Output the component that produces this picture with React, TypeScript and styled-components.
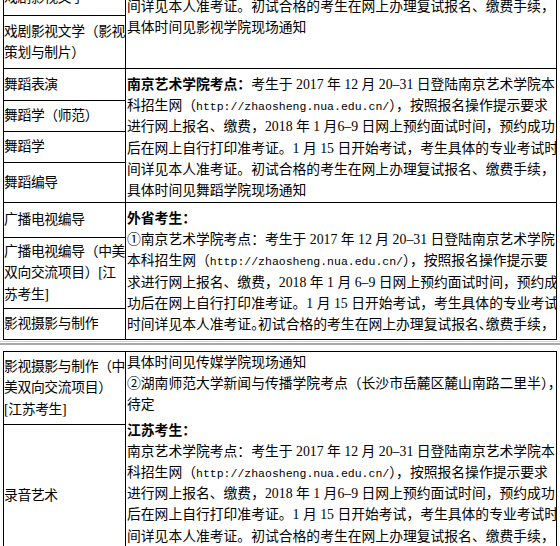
import React from 'react';
import styled, { createGlobalStyle } from 'styled-components';

const GlobalStyle = createGlobalStyle`
  html, body {
    margin: 0;
    padding: 0;
    background: #fff;
  }
  body {
    overflow: hidden;
    color: #000;
    font-family: "Liberation Serif", "Noto Sans CJK SC", serif;
    font-size: 13.8px;
  }
`;

const Page = styled.div`
  width: 560px;
  height: 546px;
  overflow: hidden;
`;

const Sheet = styled.div<{ $rows: number[]; $shift?: number }>`
  display: grid;
  grid-template-columns: 122px 431px;
  grid-template-rows: ${(p) => p.$rows.map((r) => `${r}px`).join(' ')};
  width: 554px;
  margin-left: 3px;
  margin-top: ${(p) => p.$shift ?? 0}px;
  border-top: 1px solid #000;
  border-left: 1px solid #000;
  box-sizing: border-box;
`;

const Subject = styled.div`
  grid-column: 1;
  display: flex;
  flex-direction: column;
  justify-content: center;
  min-width: 0;
  letter-spacing: -0.35px;
  border-right: 1px solid #000;
  border-bottom: 1px solid #000;
  box-sizing: border-box;
`;

const Notice = styled.div<{ $row: number; $span: number; $pad?: number }>`
  grid-column: 2;
  grid-row: ${(p) => p.$row} / span ${(p) => p.$span};
  padding: ${(p) => p.$pad ?? 5}px 0 0 1px;
  min-width: 0;
  overflow: hidden;
  border-right: 1px solid #000;
  border-bottom: 1px solid #000;
  box-sizing: border-box;
`;

const Block = styled.div<{ $gap?: number }>`
  margin-top: ${(p) => p.$gap ?? 0}px;
`;

const Line = styled.div`
  height: 21.2px;
  line-height: 21.2px;
  white-space: nowrap;
`;

const Lead = styled.strong`
  font-weight: 700;
`;

const Url = styled.span`
  font-family: "Liberation Mono", monospace;
  font-size: 11.5px;
`;

// half-width punctuation, as in the lines that hold one character more
const Narrow = styled.span`
  font-feature-settings: "halt";
`;

const PageBreak = styled.div`
  height: 11px;
  padding-top: 1px;
  box-sizing: border-box;

  &::before {
    content: '';
    display: block;
    height: 1px;
    background: #d4d4d4;
  }

  &::after {
    content: '';
    display: block;
    margin-top: 1px;
    height: 2px;
    background: #a9a9a9;
  }
`;

const SITE = 'http://zhaosheng.nua.edu.cn/';

function Label({ lines }: { lines: string[] }): JSX.Element {
  return (
    <Subject>
      {lines.map((text) => (
        <Line key={text}>{text}</Line>
      ))}
    </Subject>
  );
}

function App(): JSX.Element {
  return (
    <Page>
      <GlobalStyle />
      <Sheet $rows={[35, 53, 32, 31, 31, 40, 35, 71, 31]} $shift={-20}>
        <Label lines={['戏剧影视文学']} />
        <Label lines={['戏剧影视文学（影视', '策划与制片）']} />
        <Label lines={['舞蹈表演']} />
        <Label lines={['舞蹈学（师范）']} />
        <Label lines={['舞蹈学']} />
        <Label lines={['舞蹈编导']} />
        <Label lines={['广播电视编导']} />
        <Label lines={['广播电视编导（中美', '双向交流项目）[江', '苏考生]']} />
        <Label lines={['影视摄影与制作']} />

        <Notice $row={1} $span={2} $pad={15}>
          <Line>间详见本人准考证。初试合格的考生在网上办理复试报名、缴费手续，</Line>
          <Line>具体时间见影视学院现场通知</Line>
        </Notice>

        <Notice $row={3} $span={4}>
          <Line>
            <Lead>南京艺术学院考点：</Lead>考生于 2017 年 12 月 20–31 日登陆南京艺术学院本
          </Line>
          <Line>
            科招生网（<Url>{SITE}</Url>），按照报名操作提示要求
          </Line>
          <Line>进行网上报名、缴费，2018 年 1 月6–9 日网上预约面试时间，预约成功</Line>
          <Line>后在网上自行打印准考证。1 月 15 日开始考试，考生具体的专业考试时</Line>
          <Line>间详见本人准考证。初试合格的考生在网上办理复试报名、缴费手续，</Line>
          <Line>具体时间见舞蹈学院现场通知</Line>
        </Notice>

        <Notice $row={7} $span={3}>
          <Line>
            <Lead>外省考生：</Lead>
          </Line>
          <Line>①南京艺术学院考点：考生于 2017 年 12 月 20–31 日登陆南京艺术学院</Line>
          <Line>
            本科招生网（<Url>{SITE}</Url>），按照报名操作提示要
          </Line>
          <Line>求进行网上报名、缴费，2018 年 1 月 6–9 日网上预约面试时间，预约成</Line>
          <Line>功后在网上自行打印准考证。1 月 15 日开始考试，考生具体的专业考试</Line>
          <Line>
            时间详见本人准考证<Narrow>。</Narrow>初试合格的考生在网上办理复试报名<Narrow>、</Narrow>缴费手续，
          </Line>
        </Notice>
      </Sheet>

      <PageBreak />

      <Sheet $rows={[73, 143]}>
        <Label lines={['影视摄影与制作（中', '美双向交流项目）', '[江苏考生]']} />
        <Label lines={['录音艺术']} />

        <Notice $row={1} $span={2} $pad={0}>
          <Block>
            <Line>具体时间见传媒学院现场通知</Line>
            <Line>
              ②湖南师范大学新闻与传播学院考点（长沙市岳麓区麓山南路二里半<Narrow>）</Narrow>，
            </Line>
            <Line>待定</Line>
          </Block>
          <Block $gap={4}>
            <Line>
              <Lead>江苏考生：</Lead>
            </Line>
            <Line>南京艺术学院考点：考生于 2017 年 12 月 20–31 日登陆南京艺术学院本</Line>
            <Line>
              科招生网（<Url>{SITE}</Url>），按照报名操作提示要求
            </Line>
            <Line>进行网上报名、缴费，2018 年 1 月6–9 日网上预约面试时间，预约成功</Line>
            <Line>后在网上自行打印准考证。1 月 15 日开始考试，考生具体的专业考试时</Line>
            <Line>间详见本人准考证。初试合格的考生在网上办理复试报名、缴费手续，</Line>
          </Block>
        </Notice>
      </Sheet>
    </Page>
  );
}

export default App;
